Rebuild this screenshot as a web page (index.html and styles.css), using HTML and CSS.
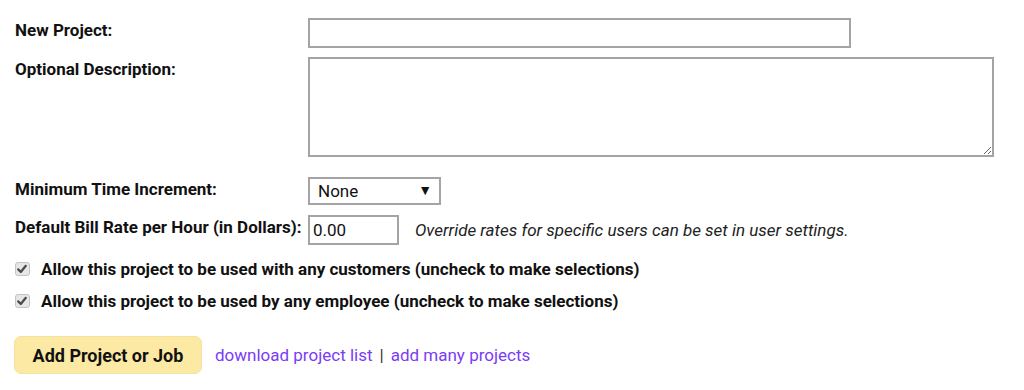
FILE: index.html
```html
<!DOCTYPE html>
<html lang="en">
<head>
<meta charset="utf-8">
<title>New Project</title>
<link rel="stylesheet" href="styles.css">
</head>
<body>
<form class="form">
  <div class="row row-name">
    <label class="label" for="name">New Project:</label>
    <input class="field field-name" id="name" type="text">
  </div>
  <div class="row row-desc">
    <label class="label" for="desc">Optional Description:</label>
    <textarea class="field field-desc" id="desc"></textarea>
  </div>
  <div class="row row-incr">
    <label class="label" for="incr">Minimum Time Increment:</label>
    <div class="select-wrap">
      <select class="field field-select" id="incr">
        <option>None</option>
      </select>
      <span class="select-arrow">▼</span>
    </div>
  </div>
  <div class="row row-rate">
    <label class="label" for="rate">Default Bill Rate per Hour (in Dollars):</label>
    <div class="rate-group">
      <input class="field field-rate" id="rate" type="text" value="0.00">
      <span class="note">Override rates for specific users can be set in user settings.</span>
    </div>
  </div>
  <label class="check-row check-first">
    <span class="check-box"><svg viewBox="0 0 14 14" width="14" height="14"><path d="M3.2 7.4 L5.8 10 L10.8 3.8" fill="none" stroke="#4a4a4a" stroke-width="2.2" stroke-linecap="round" stroke-linejoin="round"/></svg></span>
    <span class="check-text">Allow this project to be used with any customers (uncheck to make selections)</span>
  </label>
  <label class="check-row">
    <span class="check-box"><svg viewBox="0 0 14 14" width="14" height="14"><path d="M3.2 7.4 L5.8 10 L10.8 3.8" fill="none" stroke="#4a4a4a" stroke-width="2.2" stroke-linecap="round" stroke-linejoin="round"/></svg></span>
    <span class="check-text">Allow this project to be used by any employee (uncheck to make selections)</span>
  </label>
  <div class="actions">
    <button type="button" class="btn">Add Project or Job</button>
    <a class="link" href="#">download project list</a>
    <span class="sep">|</span>
    <a class="link" href="#">add many projects</a>
  </div>
</form>
</body>
</html>
```

FILE: styles.css
```css
* { box-sizing: border-box; }
html, body { margin: 0; background: #fff; }
body {
  font-family: Roboto, "Liberation Sans", Arial, sans-serif;
  font-size: 17px;
  color: #111;
}
.form {
  padding: 18px 15px 0 15px;
  display: flex;
  flex-direction: column;
}
.row {
  display: flex;
  align-items: flex-start;
}
.label {
  width: 293px;
  flex: none;
  font-weight: 700;
  line-height: 20px;
  padding-top: 2px;
}
.field {
  border: 2px solid #a4a4a4;
  background: #fff;
  font-family: inherit;
  font-size: 17px;
  color: #111;
  margin: 0;
  border-radius: 0;
  outline: none;
}
.field-name { width: 543px; height: 30px; }
.row-desc { margin-top: 9px; }
.field-desc { width: 686px; height: 100px; resize: both; display: block; }
.row-incr { margin-top: 20px; }
.select-wrap { position: relative; }
.field-select {
  appearance: none;
  -webkit-appearance: none;
  width: 133px;
  height: 28px;
  padding: 0 0 0 8px;
  display: block;
}
.select-arrow {
  position: absolute;
  right: 9px;
  top: 5px;
  font-size: 14px;
  color: #111;
  pointer-events: none;
}
.row-rate { margin-top: 10px; }
.rate-group { display: flex; align-items: center; gap: 16px; }
.field-rate { width: 91px; height: 30px; padding: 0 3px; }
.note { font-style: italic; font-size: 17px; color: #222; }
.check-row {
  display: flex;
  align-items: center;
  gap: 11px;
  height: 32px;
  font-weight: 700;
}
.check-first { margin-top: 8px; }
.check-box {
  width: 15px;
  height: 14px;
  flex: none;
  border: 1px solid #c4c4c4;
  border-radius: 3px;
  background: #e6e6e6;
  display: flex;
}
.check-box svg { display: block; margin: -1px; }
.actions {
  margin-top: 19px;
  display: flex;
  align-items: center;
}
.btn {
  width: 188px;
  height: 38px;
  margin-left: -1px;
  border: 1px solid #f6e2a0;
  border-radius: 7px;
  background: #fce9a3;
  font-family: inherit;
  font-size: 18px;
  font-weight: 700;
  color: #111;
  padding: 0;
}
.link {
  color: #7b3cf6;
  text-decoration: none;
  font-size: 17px;
}
.actions .btn + .link { margin-left: 13px; }
.sep { margin: 0 7px; color: #333; }
```
